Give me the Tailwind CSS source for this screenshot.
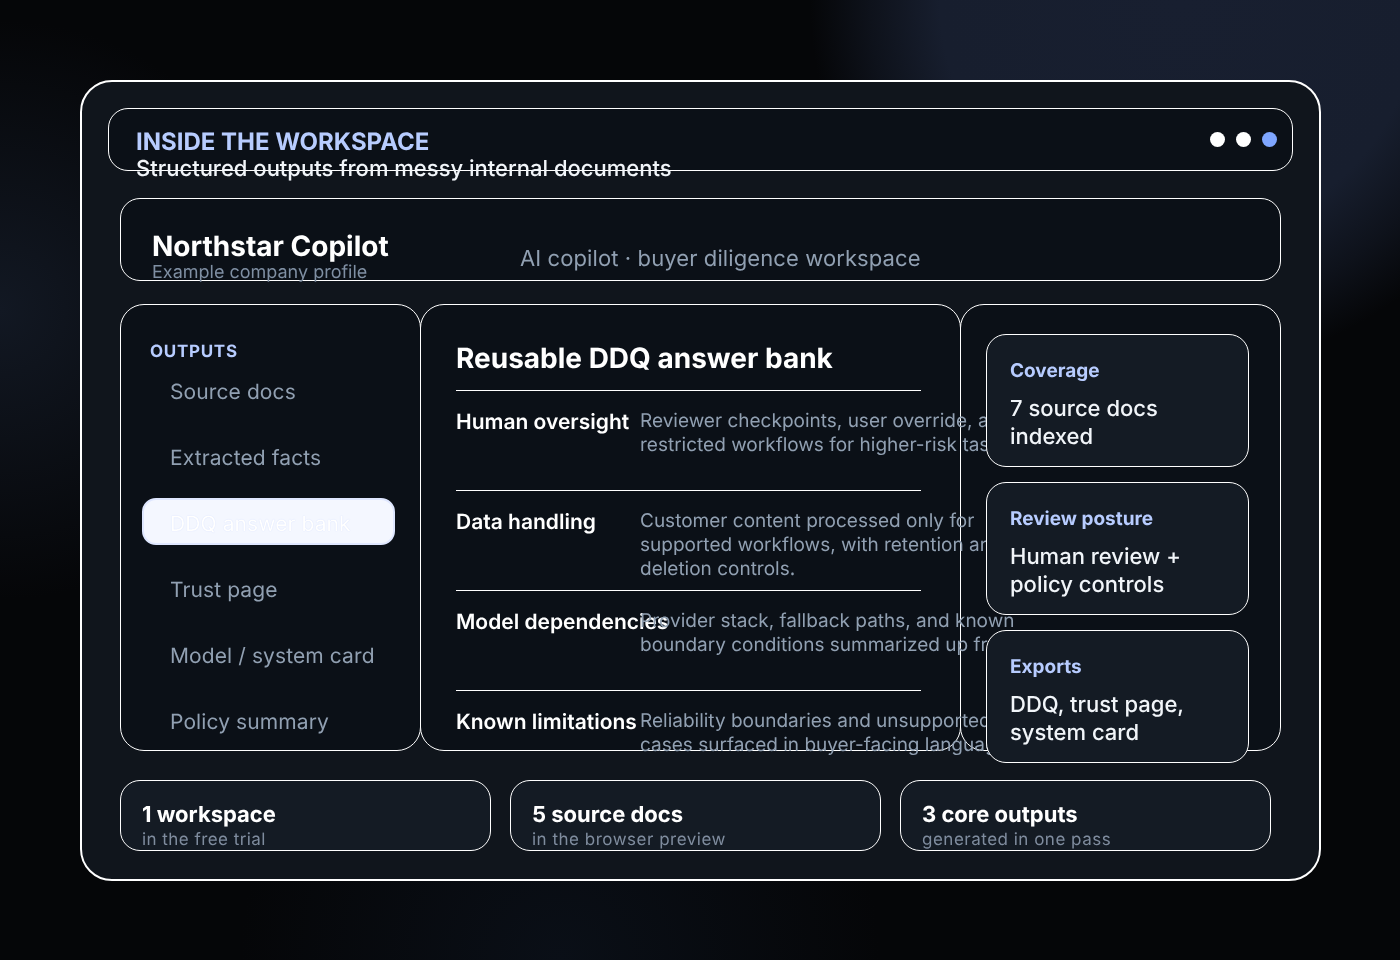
<!DOCTYPE html>
<html>

<head>
  <meta charset="utf-8">
  <script src="https://cdn.jsdelivr.net/npm/@tailwindcss/browser@4"></script>
</head>

<body class="w-[1400px] h-[960px] overflow-hidden p-20 font-['Inter',sans-serif] [text-rendering:geometricPrecision] bg-[#050608] bg-[radial-gradient(circle_at_1180px_0px,#181f30_0px,#171e2e_240px,#0e121b_310px,transparent_370px),radial-gradient(circle_at_0px_310px,#121823_0px,transparent_290px),radial-gradient(circle_at_560px_960px,#0a0f17_0px,transparent_320px)]">
  <div class="w-[1241px] h-[801px] p-[26px] border-2 border-white rounded-[32px] bg-[#10151c] flex flex-col [will-change:transform]">

    <!-- top bar -->
    <div class="h-[63px] shrink-0 border border-white rounded-[20px] bg-[#0b1017] pl-[27px] pr-[15px] pt-[18px] flex justify-between">
      <div>
        <div class="text-[24px] leading-[29px] font-bold text-[#b7ccff]">INSIDE THE WORKSPACE</div>
        <div class="mt-px text-[22px] leading-[24px] font-medium text-[#f1f5f9] whitespace-nowrap">Structured outputs from messy internal documents</div>
      </div>
      <div class="flex gap-[11px] pt-[5px]">
        <span class="w-[15px] h-[15px] rounded-full bg-white"></span>
        <span class="w-[15px] h-[15px] rounded-full bg-white"></span>
        <span class="w-[15px] h-[15px] rounded-full bg-[#7fa6ff]"></span>
      </div>
    </div>

    <!-- company -->
    <div class="h-[83px] shrink-0 mt-[27px] mx-3 border border-white rounded-[20px] bg-[#0b1017] pl-[31px] pt-[31px] flex">
      <div class="w-[368px]">
        <div class="text-[28px] leading-[32px] font-bold text-white">Northstar Copilot</div>
        <div class="mt-px text-[18px] leading-[20px] text-[#7f8fa3]">Example company profile</div>
      </div>
      <div class="text-[22px] leading-[26px] text-[#91a0b2] pt-[16px] tracking-[0.1px]">AI copilot · buyer diligence workspace</div>
    </div>

    <!-- columns -->
    <div class="h-[447px] shrink-0 mt-[23px] mx-3 grid grid-cols-[300px_540px_321px] grid-rows-[447px]">
      <div class="w-[301px] border border-white rounded-[24px] bg-[#0b1017] pl-[21px] pr-[25px] pt-[36px]">
        <div class="pl-2 text-[17px] leading-[22px] font-bold tracking-[0.7px] text-[#b7ccff]">OUTPUTS</div>
        <div class="mt-[3px] flex flex-col">
          <div class="h-[47px] mb-[19px] pl-7 pt-[6px] flex items-center text-[21px] tracking-[0.1px] text-[#91a0b2]">Source docs</div>
          <div class="h-[47px] mb-[19px] pl-7 pt-[6px] flex items-center text-[21px] tracking-[0.1px] text-[#91a0b2]">Extracted facts</div>
          <div class="h-[47px] mb-[19px] pl-[26px] pt-[6px] flex items-center text-[21px] tracking-[0.1px] text-white rounded-[14px] border-2 border-[#dfe7ff] bg-[#f4f7ff] [text-shadow:0_0_1px_#c9d6ff]">DDQ answer bank</div>
          <div class="h-[47px] mb-[19px] pl-7 pt-[6px] flex items-center text-[21px] tracking-[0.1px] text-[#91a0b2]">Trust page</div>
          <div class="h-[47px] mb-[19px] pl-7 pt-[6px] flex items-center text-[21px] tracking-[0.1px] text-[#91a0b2]">Model / system card</div>
          <div class="h-[47px] pl-7 pt-[6px] flex items-center text-[21px] tracking-[0.1px] text-[#91a0b2]">Policy summary</div>
        </div>
      </div>

      <div class="relative z-10 w-[541px] border border-white rounded-[24px] bg-[#0b1017] pl-[35px] pr-[39px] pt-[32px]">
        <div class="text-[28px] leading-[42px] pb-[11px] font-bold text-white border-b border-white">Reusable DDQ answer bank</div>
        <div class="h-[100px] border-b border-white pt-[18px] flex">
          <div class="w-[184px] shrink-0 mt-px text-[21px] leading-[26px] font-semibold text-white whitespace-nowrap">Human oversight</div>
          <div class="w-[396px] shrink-0 text-[19px] leading-[24px] text-[#91a0b2]">Reviewer checkpoints, user override, and restricted workflows for higher-risk tasks.</div>
        </div>
        <div class="h-[100px] border-b border-white pt-[18px] flex">
          <div class="w-[184px] shrink-0 mt-px text-[21px] leading-[26px] font-semibold text-white whitespace-nowrap">Data handling</div>
          <div class="w-[396px] shrink-0 text-[19px] leading-[24px] text-[#91a0b2]">Customer content processed only for supported workflows, with retention and deletion controls.</div>
        </div>
        <div class="h-[100px] border-b border-white pt-[18px] flex">
          <div class="w-[184px] shrink-0 mt-px text-[21px] leading-[26px] font-semibold text-white whitespace-nowrap">Model dependencies</div>
          <div class="w-[396px] shrink-0 text-[19px] leading-[24px] text-[#91a0b2]">Provider stack, fallback paths, and known boundary conditions summarized up front.</div>
        </div>
        <div class="pt-[18px] flex">
          <div class="w-[184px] shrink-0 mt-px text-[21px] leading-[26px] font-semibold text-white whitespace-nowrap">Known limitations</div>
          <div class="w-[396px] shrink-0 text-[19px] leading-[24px] text-[#91a0b2]">Reliability boundaries and unsupported use cases surfaced in buyer-facing language.</div>
        </div>
      </div>

      <div class="border border-white rounded-[24px] bg-[#0b1017] pl-[25px] pt-[29px] flex flex-col gap-4">
        <div class="relative z-20 w-[263px] h-[133px] shrink-0 border border-white rounded-[20px] bg-[#141b24] px-[23px] pt-[24px]">
          <div class="text-[19px] leading-[24px] font-bold text-[#b7ccff]">Coverage</div>
          <div class="mt-[12px] text-[22px] leading-[28px] font-medium text-[#f1f5f9]">7 source docs indexed</div>
        </div>
        <div class="relative z-20 w-[263px] h-[133px] shrink-0 -mt-px border border-white rounded-[20px] bg-[#141b24] px-[23px] pt-[24px]">
          <div class="text-[19px] leading-[24px] font-bold text-[#b7ccff]">Review posture</div>
          <div class="mt-[12px] text-[22px] leading-[28px] font-medium text-[#f1f5f9]">Human review + policy controls</div>
        </div>
        <div class="relative z-20 w-[263px] h-[133px] shrink-0 -mt-px border border-white rounded-[20px] bg-[#141b24] px-[23px] pt-[24px]">
          <div class="text-[19px] leading-[24px] font-bold text-[#b7ccff]">Exports</div>
          <div class="mt-[12px] text-[22px] leading-[28px] font-medium text-[#f1f5f9]">DDQ, trust page, system card</div>
        </div>
      </div>
    </div>

    <!-- stats -->
    <div class="h-[71px] shrink-0 mt-[29px] mx-3 flex gap-[19px]">
      <div class="w-[371px] border border-white rounded-[20px] bg-[#141b24] pl-[21px] pt-[21px]">
        <div class="text-[22px] leading-[26px] font-bold text-white">1 workspace</div>
        <div class="mt-px text-[17px] leading-[22px] text-[#7f8c9e] tracking-[0.45px]">in the free trial</div>
      </div>
      <div class="w-[371px] border border-white rounded-[20px] bg-[#141b24] pl-[21px] pt-[21px]">
        <div class="text-[22px] leading-[26px] font-bold text-white">5 source docs</div>
        <div class="mt-px text-[17px] leading-[22px] text-[#7f8c9e] tracking-[0.5px]">in the browser preview</div>
      </div>
      <div class="w-[371px] border border-white rounded-[20px] bg-[#141b24] pl-[21px] pt-[21px]">
        <div class="text-[22px] leading-[26px] font-bold text-white">3 core outputs</div>
        <div class="mt-px text-[17px] leading-[22px] text-[#7f8c9e] tracking-[0.5px]">generated in one pass</div>
      </div>
    </div>
  </div>
</body>

</html>
